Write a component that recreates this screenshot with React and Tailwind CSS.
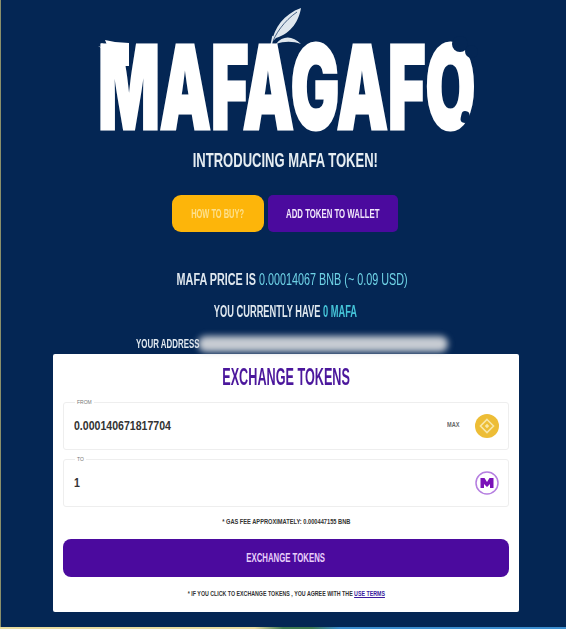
import React from "react";

const sans = "font-['Liberation_Sans',Arial,sans-serif]";

const Feather = () => (
  <svg viewBox="0 0 60 50" className="absolute left-[264px] top-[6px] w-[60px] h-[50px]">
    <path d="M8 36 C10 22 20 8 37 2 C35 14 28 27 12 32 Z" fill="#dfe7ee" />
    <path d="M7 40 C11 28 20 15 33 6" stroke="#042654" strokeWidth="0.7" fill="none" />
    <path d="M7 40 L9 30" stroke="#dfe7ee" strokeWidth="1.5" />
    <path d="M12 38 C19 29 29 30 37 38 C29 35 20 35 12 38 Z" fill="#dfe7ee" />
  </svg>
);

const Logo = () => (
  <div className="relative pt-[42px]">
    <Feather />
    <div className="flex h-[90px] items-center justify-center whitespace-nowrap pl-[8px] text-[116px] leading-[90px] font-black text-white font-['Inter',sans-serif] [-webkit-text-stroke:3px_white]">
      <span className="inline-block origin-center scale-x-[0.555]">MAFAGAFO</span>
    </div>
    {/* chicken head on the M */}
    <svg viewBox="0 0 40 30" className="absolute left-[95px] top-[36px] w-[40px] h-[30px]">
      <path d="M3 10 L9 12 L6 7 L12 9 L10 4 L20 6 L34 7 L34 30 L13 30 L12 20 L7 15 L10 14 Z" fill="#ffffff" />
    </svg>
    {/* bite and egg on the O */}
    <div className="absolute left-[452px] top-[36px] h-[16px] w-[16px] rounded-full bg-[#042654]" />
    <div className="absolute left-[465px] top-[45px] h-[13px] w-[13px] rounded-full bg-[#042654]" />
    <div className="absolute left-[461px] top-[111px] h-[12px] w-[8px] rotate-12 rounded-full bg-[#042654]" />
  </div>
);

const Squeezed = ({ children, className = "", amount = "scale-x-[0.62]" }) => (
  <div className={`flex justify-center whitespace-nowrap font-bold ${sans} ${className}`}>
    <span className={`inline-block origin-center ${amount}`}>{children}</span>
  </div>
);

const CoinBnb = () => (
  <svg viewBox="0 0 24 24" className="h-[24px] w-[24px]">
    <circle cx="12" cy="12" r="12" fill="#edbd36" />
    <path d="M12 5.5 L18.5 12 L12 18.5 L5.5 12 Z" fill="none" stroke="#f8e7a8" strokeWidth="1.6" />
    <path d="M12 9.8 L14.2 12 L12 14.2 L9.8 12 Z" fill="#f8e7a8" />
  </svg>
);

const CoinMafa = () => (
  <svg viewBox="0 0 24 24" className="h-[24px] w-[24px]">
    <circle cx="12" cy="12" r="11" fill="#ffffff" stroke="#b57ee0" strokeWidth="1.5" />
    <path d="M5.5 17 L5.5 7 L9.5 7 L12 11 L14.5 7 L18.5 7 L18.5 17 L15 17 L15 13 L12 16 L9 13 L9 17 Z" fill="#7a12b8" />
  </svg>
);

const Field = ({ label, value, right, className = "" }) => (
  <fieldset className={`h-[50px] rounded-[3px] border border-[#eeeeee] pl-[10px] pr-[9px] ${className}`}>
    <legend className={`ml-[1px] px-[2px] text-[5px] leading-[5px] text-[#777777] ${sans}`}>{label}</legend>
    <div className="flex h-[41px] items-center justify-between">
      <span className={`inline-block origin-left scale-x-[0.88] text-[12px] font-bold text-[#333333] ${sans}`}>{value}</span>
      {right}
    </div>
  </fieldset>
);

export default function App() {
  return (
    <div className="relative h-[629px] w-[566px] overflow-hidden bg-[#042654]">
      <div className="blur-[0.4px]">
        <Logo />
        <Squeezed className="mt-[16px] pl-[4px] text-[21px] leading-[24px] text-[#e6edf2]">INTRODUCING MAFA TOKEN!</Squeezed>

        <div className="mt-[23px] flex justify-center gap-[4px] pl-[4px]">
          <button className="h-[37px] w-[92px] rounded-[9px] bg-[#fdb50a]">
            <Squeezed className="text-[12px] text-[#fde08c]">HOW TO BUY?</Squeezed>
          </button>
          <button className="h-[37px] w-[130px] rounded-[5px] bg-[#4b0a9e]">
            <Squeezed className="text-[13px] text-[#f0e6fa]" amount="scale-x-[0.6]">ADD TOKEN TO WALLET</Squeezed>
          </button>
        </div>

        <Squeezed className="mt-[39px] pl-[19px] text-[16px] leading-[18px] text-[#dfe7ee]" amount="scale-x-[0.675]">
          MAFA PRICE IS <span className="font-normal text-[#6fd3e6]">0.00014067 BNB (~ 0.09 USD)</span>
        </Squeezed>
        <Squeezed className="mt-[14px] pl-[4px] text-[16px] leading-[18px] text-[#dfe7ee]" amount="scale-x-[0.58]">
          YOU CURRENTLY HAVE <span className="text-[#45c4d8]">0 MAFA</span>
        </Squeezed>

        <div className="mt-[13px] flex h-[20px] items-center pl-[136px]">
          <span className={`w-[62px] whitespace-nowrap text-[12px] font-bold text-[#dfe7ee] ${sans}`}>
            <span className="inline-block origin-left scale-x-[0.66]">YOUR ADDRESS</span>
          </span>
          <div className="h-[16px] w-[250px] rounded-full bg-[#c7ccd3] blur-[3px]" />
        </div>

        <div className="ml-[53px] flex h-[258px] w-[466px] flex-col rounded-[2px] bg-white px-[10px]">
          <Squeezed className="mt-[10px] text-[23px] leading-[26px] text-[#4b179c]" amount="scale-x-[0.55]">EXCHANGE TOKENS</Squeezed>
          <Field
            label="FROM"
            value="0.000140671817704"
            className="mt-[10px]"
            right={
              <div className="flex items-center gap-[15px]">
                <span className={`inline-block origin-right scale-x-[0.8] text-[7px] font-bold text-[#666666] ${sans}`}>MAX</span>
                <CoinBnb />
              </div>
            }
          />
          <Field label="TO" value="1" className="mt-[7px]" right={<CoinMafa />} />
          <Squeezed className="mt-[10px] text-[8px] leading-[10px] text-[#333333]" amount="scale-x-[0.71]">
            * GAS FEE APPROXIMATELY: 0.000447155 BNB
          </Squeezed>
          <button className="mt-[12px] h-[38px] rounded-[8px] bg-[#4b0a9e]">
            <Squeezed className="text-[13px] text-[#e7cffa]" amount="scale-x-[0.6]">EXCHANGE TOKENS</Squeezed>
          </button>
          <Squeezed className="mt-[12px] text-[8px] leading-[10px] text-[#333333]" amount="scale-x-[0.66]">
            * IF YOU CLICK TO EXCHANGE TOKENS , YOU AGREE WITH THE <span className="text-[#3a1a9e] underline">USE TERMS</span>
          </Squeezed>
        </div>
      </div>

      {/* edge of the desktop showing behind the recording */}
      <div className="absolute inset-y-0 left-0 w-[1px] bg-[#8a8f6a]" />
      <div className="absolute inset-x-0 bottom-0 h-[2px] bg-[linear-gradient(90deg,#e8dca0_0%,#e8dca0_45%,#3f7a50_50%,#3f7a50_55%,#3d8fd0_60%,#3d8fd0_100%)]" />
    </div>
  );
}
